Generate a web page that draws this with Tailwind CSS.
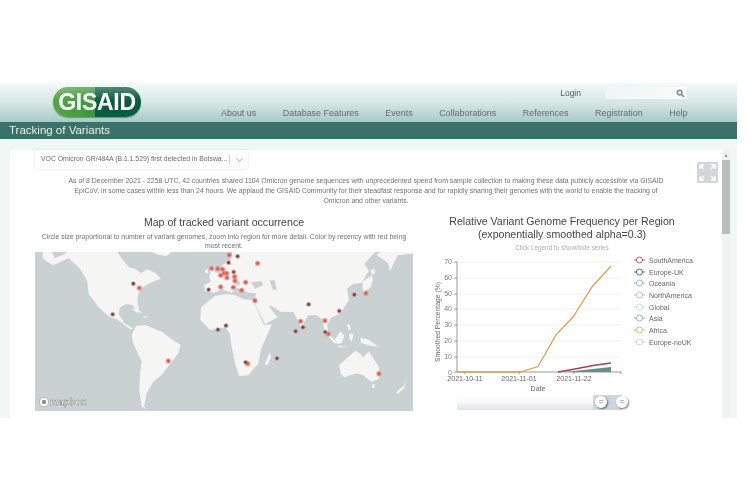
<!DOCTYPE html>
<html lang="en">
<head>
    <meta charset="UTF-8" />
    <title>GISAID - Tracking of Variants</title>
    <script src="https://cdn.jsdelivr.net/npm/@tailwindcss/browser@4"></script>
</head>
<body class="bg-white overflow-hidden font-['Liberation_Sans',sans-serif]">
    <div class="w-[750px] h-[500px] pt-[83px] blur-[0.7px]">
        <div class="w-[737px]">
            <!-- header -->
            <header class="h-[39px] flex bg-gradient-to-b from-[#f4f9f8] via-[#d6e7e4] to-[#a6cbc6]">
                <div class="w-[221px] pl-[53px] pt-[4px] shrink-0">
                    <div class="w-[88px] h-[30px] rounded-[15px] flex items-center justify-center bg-[linear-gradient(180deg,rgba(255,255,255,.28),rgba(255,255,255,0)_45%),linear-gradient(90deg,#55a543_0%,#3f9440_48%,#0f5d40_48%,#0c5a3e_100%)] shadow-[0_1px_1px_rgba(40,80,70,.5)]">
                        <span class="text-white font-bold text-[23px] tracking-[-0.3px] leading-none">GISAID</span>
                    </div>
                </div>
                <div class="flex-1 flex flex-col">
                    <div class="h-[24px] pt-[4px] flex items-start justify-end pr-[50px]">
                        <span class="text-[8.5px] leading-[12px] text-[#4d5f5d] mr-[24px]">Login</span>
                        <div class="w-[82px] h-[12px] bg-gradient-to-r from-[#eef6f4] to-[#f8fbfa] flex items-center justify-end pr-[2px]">
                            <svg width="9" height="9" viewBox="0 0 10 10" fill="none" stroke="#7d8a89" stroke-width="1.6"><circle cx="4" cy="4" r="2.6"/><path d="M6 6l3 3"/></svg>
                        </div>
                    </div>
                    <nav class="flex gap-[26.5px] text-[8.95px] leading-[12px] text-[#5d6f70]">
                        <span>About us</span>
                        <span>Database Features</span>
                        <span>Events</span>
                        <span>Collaborations</span>
                        <span>References</span>
                        <span>Registration</span>
                        <span>Help</span>
                    </nav>
                </div>
            </header>
            <div class="h-[17px] bg-[#3a7269] pl-[9px] text-[11.5px] leading-[17px] text-[#e4efec]">Tracking of Variants</div>

            <!-- content -->
            <main class="h-[279px] flex bg-[#f0f7f5] pt-[11px]">
                <div class="w-[10px] shrink-0"></div>
                <section class="w-[712px] relative bg-white">
                    <div class="ml-[25px] w-[213px] h-[19px] flex items-center pl-[6px] text-[6.85px] text-[#6a6a6a] shadow-[0_0_2px_rgba(0,0,0,.18)] rounded-[2px]">
                        <span class="w-[188px] whitespace-nowrap">VOC Omicron GR/484A (B.1.1.529) first detected in Botswa...</span>
                        <span class="h-[9px] border-l border-[#cfcfcf]"></span>
                        <svg class="ml-[6px]" width="7" height="4" viewBox="0 0 7 4" fill="none" stroke="#aaa" stroke-width=".8"><path d="M.5.5l3 3 3-3"/></svg>
                    </div>
                    <p class="mt-[7px] mx-auto w-[610px] text-center text-[6.9px] leading-[10px] text-[#707070]">As of 8 December 2021 - 2258 UTC, 42 countries shared 1104 Omicron genome sequences with unprecedented speed from sample collection to making these data publicly accessible via GISAID EpiCoV, in some cases within less than 24 hours. We applaud the GISAID Community for their steadfast response and for rapidly sharing their genomes with the world to enable the tracking of Omicron and other variants.</p>

                    <div class="flex mt-[9px]">
                        <div class="ml-[25px] w-[378px] shrink-0">
                            <h2 class="text-center text-[10.6px] leading-[14px] text-[#444]">Map of tracked variant occurrence</h2>
                            <p class="mt-[3px] mb-[2px] text-center text-[6.9px] leading-[9px] text-[#707070]">Circle size proportional to number of variant genomes, zoom into region for more detail. Color by recency with red being<br />most recent.</p>
                            <svg class="block" width="378" height="159" viewBox="35 252 378 159">
                                <rect x="35" y="252" width="378" height="159" fill="#c9d1d3"/>
                                <!-- americas -->
                                <g transform="translate(30 250) scale(.3333)" fill="#f5f5f3">
                                    <path d="M38 6L66 6 74 24 100 14 110 6 262 6 280 32 298 52 318 58 332 70 352 58 378 70 392 86 362 98 338 112 326 128 322 150 328 186 318 188 310 166 290 162 270 172 266 192 282 218 310 236 300 238 262 208 238 200 206 172 176 132 172 94 150 56 116 24 70 46 50 34 38 24Z"/>
                                    <path d="M274 6L322 6 318 30 298 50 282 28Z" fill="#c9d1d3"/>
                                    <path d="M300 176l26 4 12 10-22-6zM336 198l18 2-6 4z"/>
                                    <path d="M318 228L346 225 395 245 425 268 452 285 445 310 418 345 395 375 370 395 350 430 342 470 352 478 335 470 328 420 330 370 335 335 308 275 305 255Z"/>
                                    <path d="M365 6L425 6 410 18 385 14Z"/>
                                </g>
                                <!-- africa, eurasia, australia -->
                                <g transform="translate(215 250) scale(.3333)" fill="#f5f5f3">
                                    <path d="M0 138L34 132 60 136 86 148 114 150 126 176 146 224 170 224 138 298 130 340 100 376 72 378 60 340 50 290 44 250 30 232 -14 240 -44 210 -42 172Z"/>
                                    <path d="M150 342L164 306 168 320 158 346Z"/>
                                    <path d="M-30 124L-32 104 -12 96 -18 78 -6 66 14 70 24 44 46 30 50 6 480 6 448 42 462 62 440 98 414 102 396 116 402 150 376 190 348 204 336 226 342 258 328 238 322 208 304 196 280 196 258 232 236 186 198 186 170 168 162 170 188 202 150 222 118 156 124 130 100 128 64 112 50 128 20 118 -2 128Z"/>
                                    <path d="M4 6L52 6 44 28 30 22 22 40 4 32Z" fill="#c9d1d3"/>
                                    <path d="M-16 52l14-4 2 22-14 6zM-30 60l8-2 2 10-10 2z"/>
                                    <path d="M108 96l32-2 4 12-24 10zM164 92l14-2 8 28-12 2z" fill="#c9d1d3"/>
                                    <path d="M56 96l8 2 6-8 6 8-6 10-8-4z" fill="#c9d1d3"/>
                                    <path d="M498 6L600 6 600 10 548 16 534 44 526 64 518 38 484 14Z"/>
                                    <path d="M442 96l28-20 4 14-8 24-22 10zM466 62l12-6 2 14-8 4z"/>
                                    <path d="M330 240l34 36-4 6-30-34zM360 268l16-24 12 14-8 22-14 2zM366 286l30 6-24 0zM396 222l8 2 4 16-8 0zM404 250l12 2-6 24-6-8zM436 264l22 4 32 22-30-4-22-8z"/>
                                    <path d="M372 346L396 324 422 302 436 312 444 322 462 304 492 352 492 386 470 396 444 376 426 370 388 382 378 372Z"/>
                                    <path d="M470 404l10-2-2 12-6 0zM542 428l26-22 6-14-6 22-18 16z"/>
                                </g>
                                <!-- cases -->
                                <g transform="translate(0 210) scale(.3333)" stroke="#e98a7f" stroke-opacity=".75" stroke-width="5">
                                    <g fill="#c9534a">
                                        <circle cx="688" cy="135" r="5.500"/><circle cx="773" cy="160" r="5.500"/><circle cx="635" cy="175" r="5.500"/><circle cx="653" cy="176" r="5.500"/><circle cx="668" cy="178" r="5.500"/><circle cx="672" cy="190" r="5.500"/><circle cx="680" cy="190" r="5.500"/><circle cx="662" cy="196" r="5.500"/><circle cx="681" cy="203" r="5.500"/><circle cx="704" cy="200" r="5.500"/><circle cx="705" cy="212" r="5.500"/><circle cx="737" cy="217" r="5.500"/><circle cx="662" cy="231" r="5.500"/><circle cx="700" cy="232" r="5.500"/><circle cx="725" cy="241" r="5.500"/><circle cx="765" cy="272" r="5.500"/><circle cx="418" cy="234" r="5.500"/><circle cx="505" cy="453" r="5.500"/><circle cx="902" cy="334" r="5.500"/><circle cx="975" cy="332" r="5.500"/><circle cx="985" cy="372" r="5.500"/><circle cx="1098" cy="250" r="5.500"/><circle cx="1137" cy="491" r="5.500"/><circle cx="743" cy="461" r="5.500"/>
                                    </g>
                                    <g fill="#4f4b4b" stroke-opacity=".4">
                                        <circle cx="713" cy="139" r="5.500"/><circle cx="686" cy="158" r="5.500"/><circle cx="701" cy="186" r="5.500"/><circle cx="626" cy="239" r="5.500"/><circle cx="400" cy="221" r="5.500"/><circle cx="338" cy="313" r="5.500"/><circle cx="678" cy="347" r="5.500"/><circle cx="654" cy="359" r="5.500"/><circle cx="926" cy="283" r="5.500"/><circle cx="909" cy="352" r="5.500"/><circle cx="887" cy="364" r="5.500"/><circle cx="976" cy="366" r="5.500"/><circle cx="1018" cy="303" r="5.500"/><circle cx="1063" cy="254" r="5.500"/><circle cx="737" cy="457" r="5.500"/><circle cx="831" cy="445" r="5.500"/>
                                    </g>
                                </g>
                                <circle cx="44" cy="402" r="4.6" fill="#fff" stroke="#888" stroke-width=".5"/>
                                <circle cx="44" cy="402" r="2.2" fill="#8a8f90"/>
                                <text x="50" y="405" font-size="9.5" font-weight="bold" fill="#fff" stroke="#7d8384" stroke-width=".45">mapbox</text>
                            </svg>
                        </div>

                        <div class="ml-[10px] w-[278px] shrink-0">
                            <h2 class="text-center text-[10.6px] leading-[13px] text-[#444]">Relative Variant Genome Frequency per Region<br />(exponentially smoothed alpha=0.3)</h2>
                            <svg class="block" width="270" height="172" viewBox="423 241 270 172" font-size="7" fill="#666">
                                <text x="562" y="250" font-size="6.4" text-anchor="middle" fill="#adadad">Click Legend to show/hide series</text>
                                <g stroke="#e8eaea" stroke-width=".7">
                                    <path d="M457 262H620M457 278H620M457 294H620M457 309H620M457 325H620M457 341H620M457 357H620"/>
                                </g>
                                <path d="M457 262V372H621" fill="none" stroke="#555" stroke-width=".6"/>
                                <path d="M454 262h3M454 278h3M454 294h3M454 309h3M454 325h3M454 341h3M454 357h3M454 372h3M465 372v2M519 372v2M574 372v2M621 372v2" stroke="#555" stroke-width=".6"/>
                                <g text-anchor="end" fill="#777">
                                    <text x="452" y="264">70</text><text x="452" y="280">60</text><text x="452" y="296">50</text><text x="452" y="311">40</text><text x="452" y="327">30</text><text x="452" y="343">20</text><text x="452" y="359">10</text><text x="452" y="375">0</text>
                                </g>
                                <g text-anchor="middle" fill="#666">
                                    <text x="465" y="381">2021-10-11</text><text x="519" y="381">2021-11-01</text><text x="574" y="381">2021-11-22</text>
                                    <text x="538" y="391">Date</text>
                                    <text transform="translate(440 322) rotate(-90)" font-size="6.8">Smoothed Percentage (%)</text>
                                </g>
                                <path d="M565 372L611 367 611 372Z" fill="#5f9184"/>
                                <path d="M558 372L575 369 593 365.500 611 363" fill="none" stroke="#a8404f" stroke-width="1.3"/>
                                <path d="M457 372H520L538 366.500 556 335 573 317 592 287 611 266" fill="none" stroke="#d9a452" stroke-width="1.3"/>
                                <!-- legend -->
                                <g fill="none" stroke-width=".8">
                                    <g stroke="#a8344a"><path d="M634 260h11"/><circle cx="639.500" cy="260" r="3" fill="#fff"/></g>
                                    <g stroke="#3a3f78"><path d="M634 272h11"/><circle cx="639.500" cy="272" r="3" fill="#fff"/></g>
                                    <g stroke="#7aa7bb"><path d="M634 283h11"/><circle cx="639.500" cy="283" r="3" fill="#fff"/></g>
                                    <g stroke="#e09a90"><path d="M634 295h11"/><circle cx="639.500" cy="295" r="3" fill="#fff"/></g>
                                    <g stroke="#b4d5ce"><path d="M634 307h11"/><circle cx="639.500" cy="307" r="3" fill="#fff"/></g>
                                    <g stroke="#7fa5a5"><path d="M634 318h11"/><circle cx="639.500" cy="318" r="3" fill="#fff"/></g>
                                    <g stroke="#d9a452"><path d="M634 330h11"/><circle cx="639.500" cy="330" r="3" fill="#fff"/></g>
                                    <g stroke="#c4c4c4"><path d="M634 342h11"/><circle cx="639.500" cy="342" r="3" fill="#fff"/></g>
                                </g>
                                <g fill="#666" font-size="7">
                                    <text x="649" y="262.500">SouthAmerica</text><text x="649" y="274.500">Europe-UK</text><text x="649" y="285.500">Oceania</text><text x="649" y="297.500">NorthAmerica</text><text x="649" y="309.500">Global</text><text x="649" y="320.500">Asia</text><text x="649" y="332.500">Africa</text><text x="649" y="344.500">Europe-noUK</text>
                                </g>
                            </svg>
                        </div>
                    </div>
                    <!-- slider sits over the chart foot -->
                    <div class="absolute left-[447px] top-[245px] w-[158px] h-[15px] bg-gradient-to-b from-white via-[#f6f7f7] to-[#dfe3e4]">
                        <div class="absolute right-[-7px] top-0 w-[29px] h-[15px] bg-[#cdd6dc]"></div>
                        <div class="absolute left-[138px] top-[1px] w-[12px] h-[12px] rounded-full bg-white shadow-[1px_1px_2px_rgba(0,0,0,.55)] text-[8px] leading-[11px] text-center text-[#777]">=</div>
                        <div class="absolute left-[159px] top-[1px] w-[12px] h-[12px] rounded-full bg-white shadow-[1px_1px_2px_rgba(0,0,0,.55)] text-[8px] leading-[11px] text-center text-[#777]">=</div>
                    </div>
                    <!-- fullscreen toggle -->
                    <div class="absolute left-[687px] top-[12px] w-[21px] h-[21px] bg-[#d3d6d6] rounded-[1px]">
                        <svg width="21" height="21" viewBox="0 0 21 21" fill="none" stroke="#fff" stroke-width="1.4"><path d="M3 7V3h4M3 3l4 4M18 7V3h-4M18 3l-4 4M3 14v4h4M3 18l4-4M18 14v4h-4M18 18l-4-4"/></svg>
                    </div>
                </section>
                <!-- scrollbar -->
                <div class="w-[8px] shrink-0 bg-[#f1f3f3] flex flex-col items-center">
                    <div class="h-[10px] text-[5px] leading-[10px] text-[#888]">▲</div>
                    <div class="w-[8px] h-[74px] bg-[#bdbdbd]"></div>
                </div>
                <div class="w-[7px] shrink-0"></div>
            </main>
        </div>
    </div>
</body>
</html>
